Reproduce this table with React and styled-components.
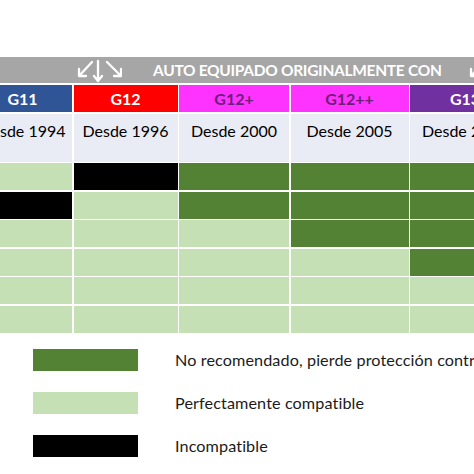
import React from "react";
import styled, { createGlobalStyle } from "styled-components";

const GlobalStyle = createGlobalStyle`
  html, body { margin: 0; padding: 0; background: #ffffff; }
  body { font-family: Lato, "Open Sans", sans-serif; }
`;

const Page = styled.div`
  width: 474px;
  height: 474px;
  overflow: hidden;
  padding-top: 57px;
  box-sizing: border-box;
  background: #ffffff;
`;

const Banner = styled.div`
  height: 26px;
  background: #a6a6a6;
  display: flex;
  align-items: center;
  padding-left: 76px;
  overflow: hidden;
`;

const Title = styled.span`
  margin-left: 31px;
  color: #ffffff;
  font-family: Lato, "Open Sans", sans-serif;
  font-weight: 700;
  font-size: 15.5px;
  white-space: nowrap;
  letter-spacing: -0.3px;
`;

const ArrowSet = styled.svg`
  flex: none;
  width: 46px;
  height: 26px;
  margin-left: ${(p) => (p.$end ? "auto" : "0")};
  margin-right: ${(p) => (p.$end ? "-40px" : "0")};
`;

const TableClip = styled.div`
  overflow: hidden;
  margin-top: 2px;
`;

const Grid = styled.div`
  display: grid;
  grid-template-columns: 99px 104px 110px 118px 110px;
  column-gap: 1.5px;
  row-gap: 1.5px;
  margin-left: -27px;
  width: max-content;
`;

const HeadCell = styled.div`
  height: 27px;
  background: ${(p) => p.$bg};
  color: ${(p) => p.$fg};
  font-family: Lato, "Open Sans", sans-serif;
  font-weight: 700;
  font-size: 16px;
  display: flex;
  align-items: center;
  justify-content: center;
`;

const YearCell = styled.div`
  height: 48px;
  background: #e9ebf5;
  color: #000000;
  font-family: Lato, "Open Sans", sans-serif;
  font-size: 16px;
  text-align: center;
  padding-top: 7px;
  box-sizing: border-box;
  white-space: nowrap;
`;

const DataCell = styled.div`
  height: 27px;
  background: ${(p) => p.$bg};
`;

const Legend = styled.div`
  display: flex;
  flex-direction: column;
  gap: 21px;
  padding-left: 33px;
  margin-top: 16px;
`;

const LegendRow = styled.div`
  display: flex;
  align-items: center;
  gap: 37px;
  white-space: nowrap;
`;

const Swatch = styled.div`
  flex: none;
  width: 105px;
  height: 22px;
  background: ${(p) => p.$bg};
`;

const LegendText = styled.span`
  font-family: Lato, "Open Sans", sans-serif;
  font-size: 16.2px;
  letter-spacing: 0.1px;
  color: #1b1b1b;
`;

const COLORS = {
  L: "#c5e0b4",
  D: "#548235",
  B: "#000000",
};

const headers = [
  { label: "G11", bg: "#2f5597", fg: "#ffffff" },
  { label: "G12", bg: "#ff0000", fg: "#ffffff" },
  { label: "G12+", bg: "#ff33ff", fg: "#6b1f78" },
  { label: "G12++", bg: "#ff33ff", fg: "#6b1f78" },
  { label: "G13", bg: "#7030a0", fg: "#ffffff" },
];

const years = ["Desde 1994", "Desde 1996", "Desde 2000", "Desde 2005", "Desde 2008"];

const rows = [
  "LBDDD",
  "BLDDD",
  "LLLDD",
  "LLLLD",
  "LLLLL",
  "LLLLL",
];

const legend = [
  { bg: COLORS.D, text: "No recomendado, pierde protección contra la corrosión" },
  { bg: COLORS.L, text: "Perfectamente compatible" },
  { bg: COLORS.B, text: "Incompatible" },
];

function Arrows({ end }) {
  return (
    <ArrowSet $end={end} viewBox="0 0 46 26" fill="none" stroke="#ffffff" strokeWidth="2.3" strokeLinecap="round" strokeLinejoin="round">
      <path d="M16 5 L3 19 M3 12 L3 19 L10 19" />
      <path d="M22 4 L22 24 M18 19 L22 24 L26 19" />
      <path d="M31 5 L45 19 M45 12 L45 19 L38 19" />
    </ArrowSet>
  );
}

export default function App() {
  return (
    <>
      <GlobalStyle />
      <Page>
        <Banner>
          <Arrows />
          <Title>AUTO EQUIPADO ORIGINALMENTE CON</Title>
          <Arrows end />
        </Banner>
        <TableClip>
          <Grid>
            {headers.map((h) => (
              <HeadCell key={h.label} $bg={h.bg} $fg={h.fg}>
                {h.label}
              </HeadCell>
            ))}
            {years.map((y) => (
              <YearCell key={y}>{y}</YearCell>
            ))}
            {rows.map((r, ri) =>
              r.split("").map((c, ci) => <DataCell key={`${ri}-${ci}`} $bg={COLORS[c]} />)
            )}
          </Grid>
        </TableClip>
        <Legend>
          {legend.map((l) => (
            <LegendRow key={l.text}>
              <Swatch $bg={l.bg} />
              <LegendText>{l.text}</LegendText>
            </LegendRow>
          ))}
        </Legend>
      </Page>
    </>
  );
}
